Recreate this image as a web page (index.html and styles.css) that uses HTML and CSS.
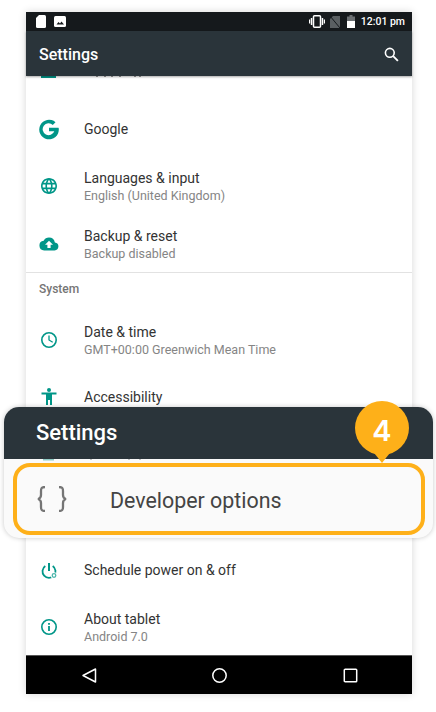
FILE: index.html
```html
<!DOCTYPE html>
<html lang="en">
<head>
    <meta charset="UTF-8">
    <title>Settings - Developer options</title>
    <link rel="stylesheet" href="styles.css">
</head>
<body>
    <div class="phone">
        <div class="status-bar">
            <svg class="status-sd" viewBox="0 0 10 13"><path d="M3 0h5.500A1.500 1.500 0 0 1 10 1.500v10A1.500 1.500 0 0 1 8.500 13h-7A1.500 1.500 0 0 1 0 11.500V3z" fill="#fff"/></svg>
            <svg class="status-photo" viewBox="0 0 12 11"><rect width="12" height="11" rx="1.500" fill="#fff"/><path d="M2.500 8.500l2-2.500 1.500 1.500 1.500-2 2.500 3z" fill="#15191c"/></svg>
            <span class="status-space"></span>
            <svg class="status-vibrate" viewBox="0 0 16 13"><rect x="4.500" y=".8" width="7" height="11.400" rx="1" fill="none" stroke="#fff" stroke-width="1.500"/><path d="M0 4.500h1.200v4H0zM1.800 3h1.500v7H1.800zM12.700 3h1.500v7h-1.500zM14.800 4.500H16v4h-1.200z" fill="#fff"/></svg>
            <svg class="status-sim" viewBox="0 0 10 12"><path d="M3 0h7v12H0V3z" fill="#5a5f62"/><path d="M0 0l10 12" stroke="#15191c" stroke-width="1"/></svg>
            <svg class="status-battery" viewBox="0 0 8 13"><path d="M2.500 0h3v1.500H8V13H0V1.500h2.500z" fill="#6b6f72"/><rect y="6" width="8" height="7" fill="#fff"/></svg>
            <span class="status-time">12:01 pm</span>
        </div>
        <div class="toolbar">
            <span class="toolbar-title">Settings</span>
            <svg class="search-icon" viewBox="0 0 16 16"><circle cx="6.200" cy="6.200" r="4.700" fill="none" stroke="#fff" stroke-width="1.700"/><path d="M9.800 9.800l5 5" stroke="#fff" stroke-width="2"/></svg>
        </div>

        <div class="list">
            <!-- bottom edge of the row scrolled under the toolbar -->
            <div class="list-peek">
                <svg class="peek-strip" viewBox="0 0 386 2"><rect x="15" width="15" height="2" fill="#009688"/><path d="M70 0h2v1h-2zM78 0h2v1h-2zM85 0h2v1h-2zM93 0h2v1h-2zM108 0h2v1h-2zM113 0h2v1h-2z" fill="#9a9a9a"/></svg>
            </div>
            <div class="row">
                <svg class="row-icon" viewBox="0 0 24 24"><path d="M21.500 10.700H12v3.600h5.300a6 6 0 1 1-1.500-6.400l2.700-2.700A9.800 9.800 0 1 0 21.800 12c0-.5-.1-.9-.3-1.300z" fill="#009688"/></svg>
                <div class="row-text"><div class="row-title">Google</div></div>
            </div>
            <div class="row">
                <svg class="row-icon" viewBox="0 0 24 24"><path d="M11.990 4C7.580 4 4 7.580 4 12s3.580 8 7.990 8C16.420 20 20 16.420 20 12s-3.580-8-8.010-8zm5.540 4.800h-2.360a12.500 12.500 0 0 0-1.100-2.850 6.420 6.420 0 0 1 3.460 2.850zM12 5.630c.66.960 1.180 2.030 1.530 3.170h-3.060c.35-1.140.87-2.210 1.530-3.170zM5.810 13.600a6.600 6.600 0 0 1 0-3.200h2.700a13 13 0 0 0 0 3.200zm.66 1.600h2.360c.26 1 .62 1.960 1.100 2.850a6.390 6.390 0 0 1-3.460-2.850zm2.360-6.400H6.470a6.390 6.390 0 0 1 3.460-2.850c-.48.890-.84 1.850-1.100 2.850zM12 18.370a11.300 11.300 0 0 1-1.530-3.170h3.060A11.300 11.300 0 0 1 12 18.370zm1.870-4.770h-3.740a11.700 11.700 0 0 1 0-3.200h3.740a11.700 11.700 0 0 1 0 3.200zm.2 4.450c.48-.89.840-1.850 1.100-2.850h2.360a6.420 6.420 0 0 1-3.460 2.850zm1.420-4.450a13 13 0 0 0 0-3.200h2.700a6.600 6.600 0 0 1 0 3.200z" fill="#009688"/></svg>
                <div class="row-text row-text-double">
                    <div class="row-title">Languages &amp; input</div>
                    <div class="row-sub">English (United Kingdom)</div>
                </div>
            </div>
            <div class="row">
                <svg class="row-icon" viewBox="0 0 24 24"><path transform="translate(2.400 2.400) scale(.8)" d="M19.350 10.040A7.490 7.490 0 0 0 12 4a7.500 7.500 0 0 0-6.650 4.040A6 6 0 0 0 6 20h13a5 5 0 0 0 .35-9.960zM14 13v4h-4v-4H7l5-5 5 5z" fill="#009688"/></svg>
                <div class="row-text row-text-double">
                    <div class="row-title">Backup &amp; reset</div>
                    <div class="row-sub">Backup disabled</div>
                </div>
            </div>
            <div class="section-head">System</div>
            <div class="row">
                <svg class="row-icon" viewBox="0 0 24 24"><circle cx="12" cy="12" r="7.200" fill="none" stroke="#009688" stroke-width="1.600"/><path d="M12 7.500V12l3.700 2.200" fill="none" stroke="#009688" stroke-width="1.300"/></svg>
                <div class="row-text row-text-double">
                    <div class="row-title">Date &amp; time</div>
                    <div class="row-sub">GMT+00:00 Greenwich Mean Time</div>
                </div>
            </div>
            <div class="row">
                <svg class="row-icon" viewBox="0 0 24 24"><circle cx="12" cy="5" r="2" fill="#009688"/><path d="M4.500 7.500h15v2H15V20h-2v-5h-2v5H9V9.500H4.500z" fill="#009688"/></svg>
                <div class="row-text"><div class="row-title">Accessibility</div></div>
            </div>
            <div class="row"></div>
            <div class="row row-gap"></div>
            <div class="row">
                <svg class="row-icon" viewBox="0 0 24 24"><path d="M11 5h2v8h-2z" fill="#009688"/><path d="M8.300 8a6.500 6.500 0 1 0 7.400 0" fill="none" stroke="#009688" stroke-width="1.800"/><circle cx="17" cy="17.500" r="3.200" fill="#fff"/><circle cx="17" cy="17.500" r="1.800" fill="none" stroke="#4db6ac" stroke-width="1.300"/></svg>
                <div class="row-text"><div class="row-title">Schedule power on &amp; off</div></div>
            </div>
            <div class="row">
                <svg class="row-icon" viewBox="0 0 24 24"><circle cx="12" cy="12" r="7.200" fill="none" stroke="#009688" stroke-width="1.600"/><path d="M11.100 11h1.800v5h-1.800zM11.100 8h1.800v1.800h-1.800z" fill="#009688"/></svg>
                <div class="row-text row-text-double">
                    <div class="row-title">About tablet</div>
                    <div class="row-sub">Android 7.0</div>
                </div>
            </div>
        </div>

        <div class="nav-bar">
            <svg class="nav-icon" viewBox="0 0 15 15"><path d="M13.500 1v13L1 7.500z" fill="none" stroke="#fff" stroke-width="1.500" stroke-linejoin="round"/></svg>
            <svg class="nav-icon" viewBox="0 0 15 15"><circle cx="7.500" cy="7.500" r="6.700" fill="none" stroke="#fff" stroke-width="1.500"/></svg>
            <svg class="nav-icon" viewBox="0 0 15 15"><rect x="1.300" y="1.300" width="12.400" height="12.400" rx=".8" fill="none" stroke="#fff" stroke-width="1.500"/></svg>
        </div>
    </div>

    <!-- Zoomed callout over the list -->
    <div class="callout">
        <div class="callout-head">Settings</div>
        <svg class="callout-strip" viewBox="0 0 428 2"><rect x="39" width="11" height="1.500" fill="#8fc9c3"/><path d="M86 0h2v1h-2zM124 0h2v1h-2zM135 0h2v1h-2z" fill="#c4c4c4"/></svg>
        <div class="callout-body">
            <div class="callout-item">
                <svg class="braces" viewBox="0 0 30 26"><path d="M8 1C4.500 1 4 2.500 4 5v4c0 2-1 3.500-3 4 2 .5 3 2 3 4v4c0 2.500.5 4 4 4M22 1c3.500 0 4 1.500 4 4v4c0 2 1 3.500 3 4-2 .5-3 2-3 4v4c0 2.500-.5 4-4 4" fill="none" stroke="#757575" stroke-width="2.300"/></svg>
                <span class="callout-label">Developer options</span>
            </div>
        </div>
    </div>
    <div class="step-pin">
        <span class="step-number">4</span>
    </div>
</body>
</html>
```

FILE: styles.css
```css
html, body {
    margin: 0;
    height: 100%;
    background-color: #ffffff;
    overflow: hidden;
}
body {
    font-family: Roboto, sans-serif;
    position: relative;
}
.phone {
    display: flex;
    flex-direction: column;
    width: 386px;
    height: 682px;
    margin: 12px 0 0 26px;
    background-color: #ffffff;
    box-shadow: 0 0 8px rgba(0, 0, 0, 0.16);
}
.status-bar {
    display: flex;
    align-items: center;
    flex: none;
    height: 19px;
    padding: 0 7px 0 10px;
    background-color: #15191c;
    color: #ffffff;
}
.status-sd {
    width: 10px;
    height: 13px;
    margin-right: 8px;
}
.status-photo {
    width: 12px;
    height: 11px;
}
.status-space {
    flex: 1;
}
.status-vibrate {
    width: 16px;
    height: 13px;
    margin-right: 5px;
}
.status-sim {
    width: 10px;
    height: 12px;
    margin-right: 7px;
}
.status-battery {
    width: 8px;
    height: 13px;
    margin-right: 6px;
}
.status-time {
    font-size: 10.5px;
    font-weight: 500;
}
.toolbar {
    display: flex;
    align-items: center;
    justify-content: space-between;
    flex: none;
    box-sizing: border-box;
    height: 45px;
    padding: 1px 13px 0;
    background-color: #2a343a;
    box-shadow: 0 1px 2px rgba(0, 0, 0, 0.35);
    position: relative;
    z-index: 1;
}
.toolbar-title {
    color: #ffffff;
    font-size: 16px;
    font-weight: 500;
}
.search-icon {
    width: 15px;
    height: 15px;
}
.list {
    flex: 1;
    min-height: 0;
    overflow: hidden;
}
.list-peek {
    height: 24.33px;
}
.peek-strip {
    display: block;
    width: 386px;
    height: 2px;
}
.row {
    display: flex;
    align-items: center;
    height: 57.33px;
    padding-left: 10.5px;
}
.row-gap {
    margin-top: 0.7px;
}
.row-icon {
    flex: none;
    width: 24px;
    height: 24px;
    margin-right: 23.5px;
}
.row-text-double {
    padding-top: 2px;
}
.row-title {
    color: #333333;
    font-size: 14px;
    line-height: 18px;
}
.row-sub {
    color: #858585;
    font-size: 12.5px;
    line-height: 18px;
}
.section-head {
    height: 37.7px;
    padding-left: 13px;
    border-top: 1px solid #e2e2e2;
    color: #757575;
    font-size: 12px;
    font-weight: 500;
    line-height: 32px;
}
.nav-bar {
    display: flex;
    align-items: center;
    justify-content: center;
    gap: 115.5px;
    flex: none;
    height: 38px;
    padding-left: 1px;
    border-top: 1px solid #555555;
    background-color: #000000;
}
.nav-icon {
    width: 15px;
    height: 15px;
}
.callout {
    position: absolute;
    left: 4px;
    top: 407px;
    width: 428.5px;
    height: 130.5px;
    border-radius: 15px;
    overflow: hidden;
    background-color: #fafafa;
    box-shadow: 0 0 5px rgba(0, 0, 0, 0.22);
}
.callout-head {
    height: 52px;
    padding-left: 32px;
    background-color: #2a343a;
    color: #ffffff;
    font-size: 22px;
    font-weight: 500;
    line-height: 51px;
}
.callout-strip {
    display: block;
    width: 428px;
    height: 2px;
}
.callout-body {
    padding: 2px 8px 0 9px;
}
.callout-item {
    display: flex;
    align-items: center;
    box-sizing: border-box;
    height: 72px;
    padding-left: 20px;
    border: 4px solid #feb019;
    border-radius: 17px;
}
.braces {
    flex: none;
    width: 30px;
    height: 26px;
    margin-right: 43px;
}
.callout-label {
    padding-top: 3px;
    color: #444444;
    font-size: 21.4px;
}
.step-pin {
    position: absolute;
    left: 355px;
    top: 401px;
    width: 54px;
    height: 54px;
    border-radius: 50%;
    background-color: #feb019;
    display: flex;
    align-items: center;
    justify-content: center;
}
.step-pin::after {
    content: "";
    position: absolute;
    left: 16px;
    top: 48px;
    border-left: 11px solid transparent;
    border-right: 11px solid transparent;
    border-top: 14px solid #feb019;
}
.step-number {
    position: relative;
    z-index: 1;
    padding-top: 4px;
    color: #ffffff;
    font-family: Inter, sans-serif;
    font-size: 29px;
    font-weight: 600;
}
```
